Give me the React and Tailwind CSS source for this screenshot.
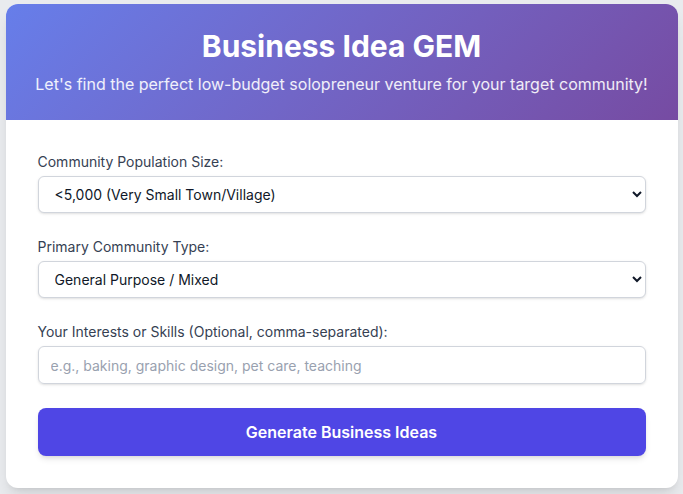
import { useState } from "react";

const populationOptions = [
  "<5,000 (Very Small Town/Village)",
  "5,000 - 20,000 (Small Town)",
  "20,000 - 100,000 (Mid-size Town)",
  "100,000+ (City)",
];

const communityTypes = [
  "General Purpose / Mixed",
  "Rural / Agricultural",
  "Tourist / Seasonal",
  "College Town",
  "Retirement Community",
];

const App = () => {
  const [population, setPopulation] = useState(populationOptions[0]);
  const [communityType, setCommunityType] = useState(communityTypes[0]);
  const [interests, setInterests] = useState("");

  return (
    <div className="min-h-screen bg-[#e9ebee] pt-1 font-['Inter',sans-serif]">
      <div className="mx-auto max-w-2xl overflow-hidden rounded-xl bg-white shadow-lg">
        {/* Header */}
        <div className="bg-linear-135 from-[#667eea] to-[#764ba2] px-6 py-6 text-center">
          <h1 className="mb-2 text-3xl leading-9 font-bold text-white">
            Business Idea GEM
          </h1>
          <p className="text-base leading-6 text-white/90">
            Let's find the perfect low-budget solopreneur venture for your target community!
          </p>
        </div>

        {/* Form */}
        <div className="p-8">
          <div className="mb-6">
            <label className="mb-1 block text-sm leading-5 text-gray-700">
              Community Population Size:
            </label>
            <select
              value={population}
              onChange={(e) => setPopulation(e.target.value)}
              className="block h-[37px] w-full rounded-md border border-gray-300 bg-white px-3 text-sm text-gray-900 shadow-sm"
            >
              {populationOptions.map((opt) => (
                <option key={opt}>{opt}</option>
              ))}
            </select>
          </div>

          <div className="mb-6">
            <label className="mb-1 block text-sm leading-5 text-gray-700">
              Primary Community Type:
            </label>
            <select
              value={communityType}
              onChange={(e) => setCommunityType(e.target.value)}
              className="block h-[37px] w-full rounded-md border border-gray-300 bg-white px-3 text-sm text-gray-900 shadow-sm"
            >
              {communityTypes.map((opt) => (
                <option key={opt}>{opt}</option>
              ))}
            </select>
          </div>

          <div className="mb-6">
            <label className="mb-1 block text-sm leading-5 text-gray-700">
              Your Interests or Skills (Optional, comma-separated):
            </label>
            <input
              type="text"
              value={interests}
              onChange={(e) => setInterests(e.target.value)}
              placeholder="e.g., baking, graphic design, pet care, teaching"
              className="block h-[38px] w-full rounded-md border border-gray-300 px-3 text-sm text-gray-900 shadow-sm placeholder:text-gray-400"
            />
          </div>

          <button className="h-12 w-full rounded-lg bg-[#4f46e5] text-base font-semibold text-white shadow-md">
            Generate Business Ideas
          </button>
        </div>
      </div>
    </div>
  );
};

export default App;
